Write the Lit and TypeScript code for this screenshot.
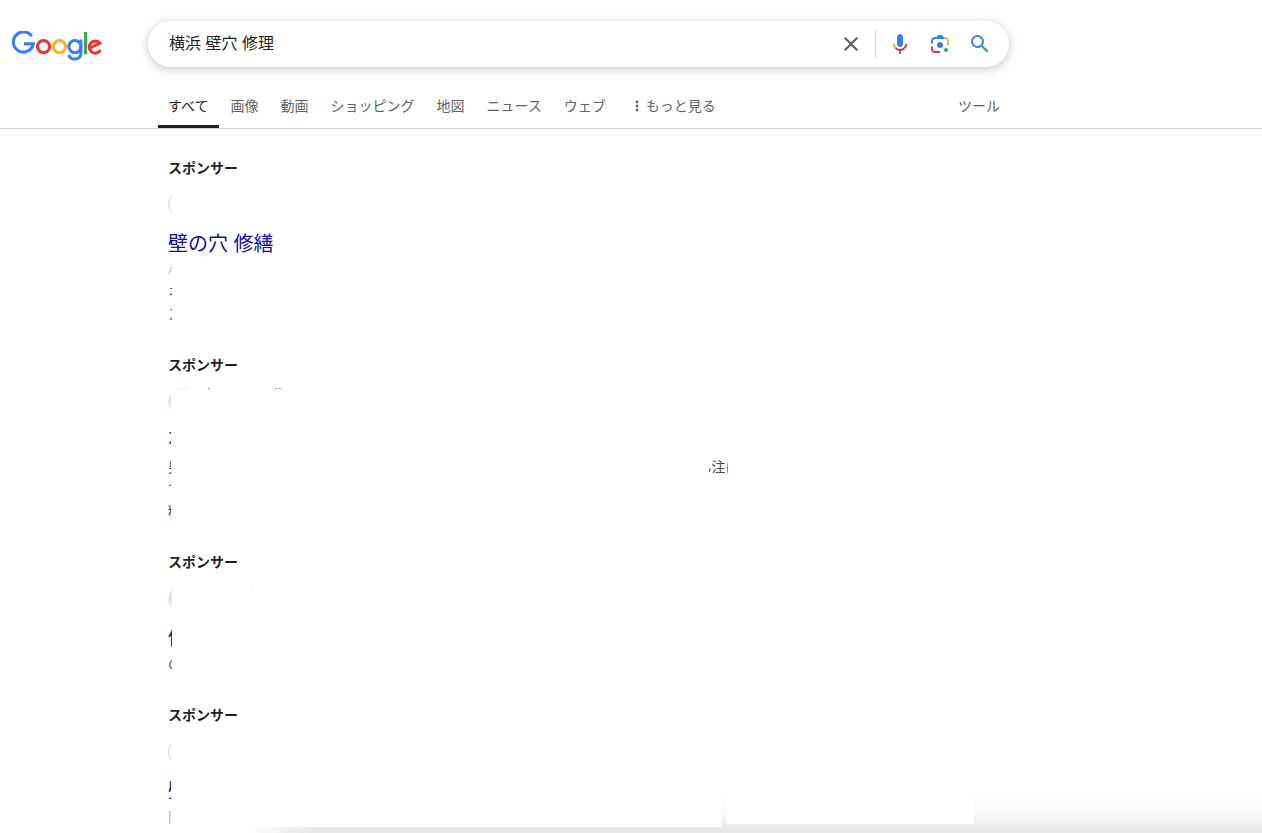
import { LitElement, html, css, svg, nothing } from "lit";
import { customElement, property } from "lit/decorators.js";

interface Line {
  text: string;
  link?: boolean;
  faint?: boolean;
  note?: string;
}

interface Ad {
  icon: "ring" | "blue" | "grey";
  narrow?: boolean;
  marks?: number[];
  title: string;
  full?: boolean;
  lines: Line[];
}

const TABS = ["すべて", "画像", "動画", "ショッピング", "地図", "ニュース", "ウェブ"];

const ADS: Ad[] = [
  {
    icon: "ring",
    title: "壁の穴 修繕",
    full: true,
    lines: [{ text: "小", faint: true }, { text: "ネ" }, { text: "ス" }],
  },
  {
    icon: "blue",
    narrow: true,
    marks: [40, 107, 111],
    title: "不",
    lines: [{ text: "男", note: "ん注に" }, { text: "て" }, { text: "料", link: true }],
  },
  { icon: "blue", marks: [83], title: "修", lines: [{ text: "の" }] },
  { icon: "grey", narrow: true, title: "壁", lines: [{ text: "国", faint: true }] },
];

@customElement("brand-logo")
class BrandLogo extends LitElement {
  static styles = css`
    :host { display: block; }
    svg { display: block; }
  `;
  render() {
    return html`<svg width="92" height="32" viewBox="0 0 92 32" fill="none" stroke-width="3.1" role="img" aria-label="Google">
      <path stroke="#3780f4" d="M19.8 5.2A10.1 10.1 0 1 0 21.4 12.9H12" />
      <circle stroke="#e53835" cx="31.6" cy="15.6" r="6.1" />
      <circle stroke="#fbb223" cx="47.5" cy="15.6" r="6.1" />
      <circle stroke="#3780f4" cx="62.9" cy="15.6" r="6.1" />
      <path stroke="#3780f4" d="M68.9 8.6v13.2c0 7.4-9.7 8.3-12.2 2.2" />
      <path stroke="#38a750" d="M73.6 1v22.3" />
      <path stroke="#e53835" d="M88.5 19A6 6 0 1 1 87.9 12.3L78.1 16.8" />
    </svg>`;
  }
}

@customElement("search-bar")
class SearchBar extends LitElement {
  static styles = css`
    :host { display: block; }
    form {
      display: flex; align-items: center; box-sizing: border-box; height: 46px;
      padding: 0 9px 0 21px; border-radius: 23px; background: #fff;
      box-shadow: 0 2px 8px 1px rgba(64, 60, 67, 0.24);
    }
    input {
      flex: 1; min-width: 0; border: 0; outline: 0; padding: 0; background: none;
      font: inherit; font-size: 16px; line-height: 24px; color: #1f1f1f;
    }
    button {
      display: grid; place-items: center; width: 40px; height: 40px;
      padding: 0; border: 0; background: none; cursor: pointer;
    }
    svg { display: block; width: 24px; height: 24px; }
    .divider { width: 1px; height: 28px; margin: 0 4px; background: #dadce0; }
  `;
  render() {
    return html`<form role="search" @submit=${(e: Event) => e.preventDefault()}>
      <input type="text" aria-label="検索" .value=${"横浜 壁穴 修理"} />
      <button type="button" aria-label="クリア"><svg viewBox="0 0 24 24" fill="#5a5b60"><path d="M19 6.41L17.59 5 12 10.59 6.41 5 5 6.41 10.59 12 5 17.59 6.41 19 12 13.41 17.59 19 19 17.59 13.41 12z"/></svg></button>
      <span class="divider"></span>
      <button type="button" aria-label="音声で検索"><svg viewBox="0 0 24 24">
        <path fill="#3780f4" d="m12 15c1.66 0 3-1.31 3-2.97v-7.02c0-1.66-1.34-3.01-3-3.01s-3 1.34-3 3.01v7.02c0 1.66 1.34 2.97 3 2.97z"/>
        <path fill="#38a750" d="m11 18.08h2v3.92h-2z"/>
        <path fill="#fbb223" d="m7.05 16.87c-1.27-1.33-2.05-2.83-2.05-4.87h2c0 1.45.56 2.42 1.47 3.38v.32l-1.15 1.18z"/>
        <path fill="#e53835" d="m12 16.93a4.97 5.25 0 0 1-3.54-1.55l-1.41 1.49c1.26 1.34 3.02 2.13 4.95 2.13 3.87 0 6.99-2.92 6.99-7h-1.99c0 2.92-2.24 4.93-5 4.93z"/>
      </svg></button>
      <button type="button" aria-label="画像で検索"><svg viewBox="0 0 192 192">
        <circle fill="#38a750" cx="144.07" cy="144" r="16"/><circle fill="#3780f4" cx="96.07" cy="104" r="24"/>
        <path fill="#e53835" d="M24,135.2c0,18.11,14.69,32.8,32.8,32.8H96v-16l-40.1-0.1c-8.8,0-15.9-8.19-15.9-17.9v-18H24V135.2z"/>
        <path fill="#fbb223" d="M168,72.8c0-18.11-14.69-32.8-32.8-32.8H116l20,16c8.8,0,16,8.29,16,18v30h16V72.8z"/>
        <path fill="#3780f4" d="M112,24l-32,0L68,40H56.8C38.69,40,24,54.69,24,72.8V92h16V74c0-9.71,7.2-18,16-18h80L124,40L112,24z"/>
      </svg></button>
      <button type="submit" aria-label="検索"><svg viewBox="0 0 24 24" fill="#3780f4"><path d="M15.5 14h-.79l-.28-.27A6.471 6.471 0 0 0 16 9.5 6.5 6.5 0 1 0 9.5 16c1.61 0 3.09-.59 4.23-1.57l.27.28v.79l5 4.99L20.49 19l-4.99-5zm-6 0C7.01 14 5 11.99 5 9.5S7.01 5 9.5 5 14 7.01 14 9.5 11.99 14 9.5 14z"/></svg></button>
    </form>`;
  }
}

@customElement("ad-block")
class AdBlock extends LitElement {
  @property({ attribute: false }) ad!: Ad;

  static styles = css`
    :host { display: block; }
    h2 { margin: 0 0 13px; font-size: 14px; line-height: 20px; font-weight: 700; color: #1f1f1f; }
    h3 { margin: 0 0 2px; font-size: 20px; line-height: 26px; font-weight: 400; }
    a { color: #1010a5; text-decoration: none; }
    svg { display: block; margin-bottom: 12px; }
    .line { display: flex; height: 22px; font-size: 14px; line-height: 22px; color: #474747; }
    .cut { display: block; width: 4px; overflow: hidden; white-space: nowrap; }
    .narrow .cut { width: 3px; }
    .faint { opacity: 0.4; }
    .note { display: flex; justify-content: center; width: 19px; margin-left: 538px; overflow: hidden; white-space: nowrap; }
  `;

  private icon() {
    const { icon, narrow, marks = [] } = this.ad;
    const fill = icon === "blue" ? "#d9e8fd" : icon === "grey" ? "#f3f4f5" : "#fff";
    const stroke = icon === "blue" ? "#d9e8fd" : "#d2d6da";
    return html`<svg width="120" height="28" viewBox="0 0 120 28" aria-hidden="true">
      <svg width=${narrow ? 3 : 4} height="28"><circle cx="14" cy="14" r="13.5" fill=${fill} stroke=${stroke} /></svg>
      ${marks.length > 1 ? svg`<rect x="9" width="10" height="1" fill="#e4effd" />` : nothing}
      ${marks.map((x) => svg`<rect x=${x} width="2" height="1" fill=${marks.length > 1 ? "#999" : "#eee"} />`)}
    </svg>`;
  }

  render() {
    const { title, full, narrow, lines } = this.ad;
    return html`<section class=${narrow ? "narrow" : ""}>
      <h2>スポンサー</h2>
      ${this.icon()}
      <h3><a class=${full ? "" : "cut"} href="#">${title}</a></h3>
      ${lines.map((l) => html`<div class="line">
        ${l.link
          ? html`<a class="cut" href="#">${l.text}</a>`
          : html`<span class="cut ${l.faint ? "faint" : ""}">${l.text}</span>`}
        ${l.note ? html`<span class="note">${l.note}</span>` : nothing}
      </div>`)}
    </section>`;
  }
}

@customElement("app-root")
class AppRoot extends LitElement {
  static styles = css`
    :host {
      display: block; position: relative; box-sizing: border-box; height: 100vh; overflow: hidden;
      background: #fff; color: #1f1f1f;
      font-family: "Liberation Sans", "Noto Sans CJK JP", sans-serif;
    }
    header { display: grid; grid-template-columns: 136px minmax(0, 861px); padding: 21px 12px 0; }
    .logo { padding-top: 10px; }
    .bar { border-bottom: 1px solid #d2d2d2; padding: 18px 12px 0 158px; }
    nav { display: flex; align-items: stretch; max-width: 853px; height: 43px; }
    nav a, nav button {
      display: flex; align-items: center; box-sizing: border-box; padding: 0 11px;
      border: 0; border-top: 1px solid transparent; border-bottom: 3px solid transparent; background: none;
      font: inherit; font-size: 14px; line-height: 20px; color: #5f6368;
      text-decoration: none; white-space: nowrap; cursor: pointer;
    }
    nav a.active { color: #1f1f1f; border-bottom-color: #1f1f1f; padding-left: 10px; }
    nav .more { gap: 7px; margin-left: 7px; }
    nav .tools { margin-left: auto; }
    main { display: grid; gap: 30px; padding: 29px 12px 0 168px; }
    .shade {
      position: absolute; inset: auto 0 0 0; height: 40px; display: flex; align-items: flex-start; pointer-events: none;
      background: linear-gradient(to bottom, rgba(230, 230, 230, 0), rgba(230, 230, 230, 0.25) 50%, #e6e6e6);
      mask-image: linear-gradient(to right, transparent 246px, #000 312px);
    }
    .sheet { height: 34px; background: #fff; }
    .wide { width: 722px; margin-right: 5px; }
    .small { width: 247px; height: 31px; }
  `;

  render() {
    return html`
      <header>
        <a class="logo" href="#" aria-label="Google"><brand-logo></brand-logo></a>
        <search-bar></search-bar>
      </header>
      <div class="bar">
        <nav>
          ${TABS.map((t, i) => html`<a class=${i === 0 ? "active" : ""} href="#">${t}</a>`)}
          <button class="more" type="button">
            <svg width="4" height="12" viewBox="0 0 4 12" fill="#5f6368"><circle cx="2" cy="2" r="1.4"/><circle cx="2" cy="6" r="1.4"/><circle cx="2" cy="10" r="1.4"/></svg>もっと見る
          </button>
          <button class="tools" type="button">ツール</button>
        </nav>
      </div>
      <main>${ADS.map((ad) => html`<ad-block .ad=${ad}></ad-block>`)}</main>
      <div class="shade"><div class="sheet wide"></div><div class="sheet small"></div></div>
    `;
  }
}
